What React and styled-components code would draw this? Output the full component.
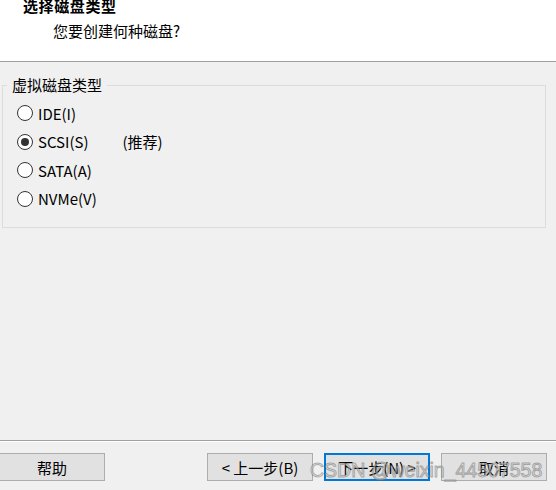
import styled, { createGlobalStyle } from 'styled-components';

const GlobalStyle = createGlobalStyle`
  html, body {
    margin: 0;
    padding: 0;
    background: #f0f0f0;
  }
  body {
    font-family: "Noto Sans CJK SC", "Open Sans", sans-serif;
    color: #000;
  }
`;

const Window = styled.div`
  position: relative;
  width: 556px;
  height: 490px;
  display: flex;
  flex-direction: column;
  overflow: hidden;
  background: #f0f0f0;
`;

const Header = styled.div`
  height: 61px;
  background: #fff;
  border-bottom: 1px solid #a0a0a0;
  overflow: hidden;
  flex-shrink: 0;
`;

const Title = styled.div`
  padding-left: 23px;
  font-size: 15px;
  font-weight: bold;
  line-height: 12px;
  letter-spacing: 0.6px;
`;

const Subtitle = styled.div`
  padding-left: 53px;
  margin-top: 12px;
  font-size: 15px;
  line-height: 14px;
`;

const Body = styled.div`
  flex: 1;
  padding: 14px 10px 0 2px;
`;

const Group = styled.fieldset`
  margin: 0;
  padding: 0 4px 14px 4px;
  border: 1px solid #dcdcdc;
  min-width: 0;
`;

const Legend = styled.legend`
  padding: 0 5px;
  font-size: 15px;
  line-height: 18px;
`;

const Options = styled.div`
  display: flex;
  flex-direction: column;
  padding: 5px 0 0 10px;
`;

const Row = styled.label`
  display: flex;
  align-items: center;
  height: 28.5px;
  font-size: 15px;
`;

const Radio = styled.span`
  width: 16px;
  height: 16px;
  box-sizing: border-box;
  border: 1px solid #333;
  border-radius: 50%;
  background: #fff;
  display: flex;
  align-items: center;
  justify-content: center;
  margin-right: 5px;

  &::after {
    content: '';
    width: 8px;
    height: 8px;
    border-radius: 50%;
    background: ${(p) => (p.checked ? '#333' : 'transparent')};
  }
`;

const Hint = styled.span`
  margin-left: 34px;
`;

const Footer = styled.div`
  flex-shrink: 0;
  height: 37px;
  border-top: 1px solid #a0a0a0;
  box-shadow: inset 0 1px 0 #fff;
  display: flex;
  align-items: flex-start;
  justify-content: space-between;
  padding: 12px 9px 0 0;
`;

const ButtonGroup = styled.div`
  display: flex;
  gap: 11px;
`;

const Button = styled.div`
  width: 106px;
  height: 28px;
  box-sizing: border-box;
  background: #e1e1e1;
  border: ${(p) => (p.primary ? '2px solid #0078d7' : '1px solid #adadad')};
  display: flex;
  align-items: center;
  justify-content: center;
  font-size: 15px;
  white-space: nowrap;
  margin-left: ${(p) => (p.edge ? '-1px' : '0')};
`;

const Watermark = styled.div`
  position: absolute;
  left: 310px;
  top: 459px;
  white-space: nowrap;
  font-family: "Liberation Sans", Arial, sans-serif;
  font-size: 19.5px;
  color: rgba(220, 220, 220, 0.55);
  -webkit-text-stroke: 1px rgba(90, 90, 90, 0.45);
  pointer-events: none;
`;

const options = [
  { label: 'IDE(I)' },
  { label: 'SCSI(S)', checked: true, hint: '(推荐)' },
  { label: 'SATA(A)' },
  { label: 'NVMe(V)' },
];

export default function App() {
  return (
    <Window>
      <GlobalStyle />
      <Header>
        <Title>选择磁盘类型</Title>
        <Subtitle>您要创建何种磁盘?</Subtitle>
      </Header>
      <Body>
        <Group>
          <Legend>虚拟磁盘类型</Legend>
          <Options>
            {options.map((o) => (
              <Row key={o.label}>
                <Radio checked={o.checked} />
                {o.label}
                {o.hint && <Hint>{o.hint}</Hint>}
              </Row>
            ))}
          </Options>
        </Group>
      </Body>
      <Footer>
        <Button edge>帮助</Button>
        <ButtonGroup>
          <Button>&lt; 上一步(B)</Button>
          <Button primary>下一步(N) &gt;</Button>
          <Button>取消</Button>
        </ButtonGroup>
      </Footer>
      <Watermark>CSDN @weixin_44507558</Watermark>
    </Window>
  );
}
